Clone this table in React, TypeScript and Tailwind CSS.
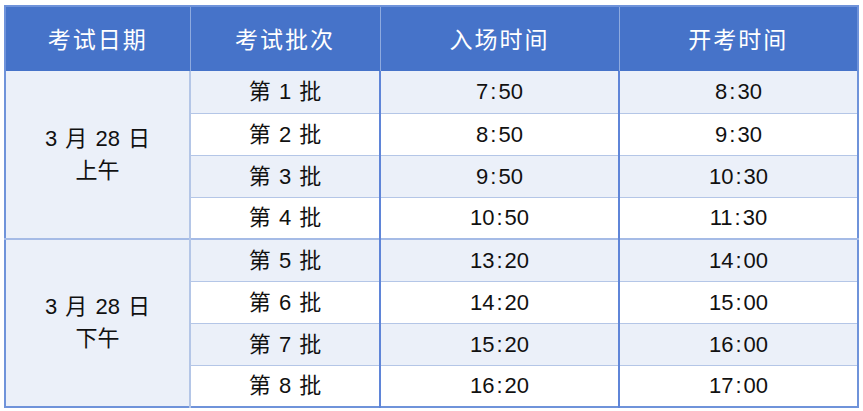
const rows = [
  { batch: "第 1 批", enter: "7:50", start: "8:30" },
  { batch: "第 2 批", enter: "8:50", start: "9:30" },
  { batch: "第 3 批", enter: "9:50", start: "10:30" },
  { batch: "第 4 批", enter: "10:50", start: "11:30" },
  { batch: "第 5 批", enter: "13:20", start: "14:00" },
  { batch: "第 6 批", enter: "14:20", start: "15:00" },
  { batch: "第 7 批", enter: "15:20", start: "16:00" },
  { batch: "第 8 批", enter: "16:20", start: "17:00" },
];

function Time({ value }: { value: string }) {
  const [h, m] = value.split(":");
  return (
    <span>
      {h}
      <span className="mx-[2px]">:</span>
      {m}
    </span>
  );
}

export default function App() {
  const headers = ["考试日期", "考试批次", "入场时间", "开考时间"];
  return (
    <div
      className="pl-[4px] pt-[5px] bg-white min-h-screen"
      style={{ fontFamily: '"Liberation Sans", "Noto Sans CJK SC", sans-serif' }}
    >
      <table className="border-collapse border-2 border-[#6f93da] text-[22px] text-[#111] [word-spacing:2px]">
        <colgroup>
          <col className="w-[185px]" />
          <col className="w-[190px]" />
          <col className="w-[239px]" />
          <col className="w-[239px]" />
        </colgroup>
        <thead>
          <tr className="h-[65px] bg-[#4673c9] text-white text-[23px]">
            {headers.map((h, i) => (
              <th
                key={h}
                className={`font-normal tracking-[2px] p-0 pt-[2px] ${i > 0 ? "border-l border-[#8eaadf]" : ""}`}
              >
                {h}
              </th>
            ))}
          </tr>
        </thead>
        <tbody>
          {rows.map((r, i) => (
            <tr
              key={r.batch}
              className={`h-[42px] ${i % 2 === 0 ? "bg-[#ebf0f9]" : "bg-white"} ${i > 0 ? "border-t border-[#b4c6e7]" : ""} ${i === 4 ? "border-t-2 border-t-[#a5bbe6]" : ""}`}
            >
              {i % 4 === 0 && (
                <td
                  rowSpan={4}
                  className="bg-[#ebf0f9] text-center leading-[32px] p-0 border-r-2 border-[#b4c6e7]"
                >
                  3 月 28 日
                  <br />
                  {i === 0 ? "上午" : "下午"}
                </td>
              )}
              <td className="text-center p-0 border-r-2 border-[#5f85d8]">{r.batch}</td>
              <td className="text-center p-0 border-r-2 border-[#5f85d8]">
                <Time value={r.enter} />
              </td>
              <td className="text-center p-0">
                <Time value={r.start} />
              </td>
            </tr>
          ))}
        </tbody>
      </table>
    </div>
  );
}
